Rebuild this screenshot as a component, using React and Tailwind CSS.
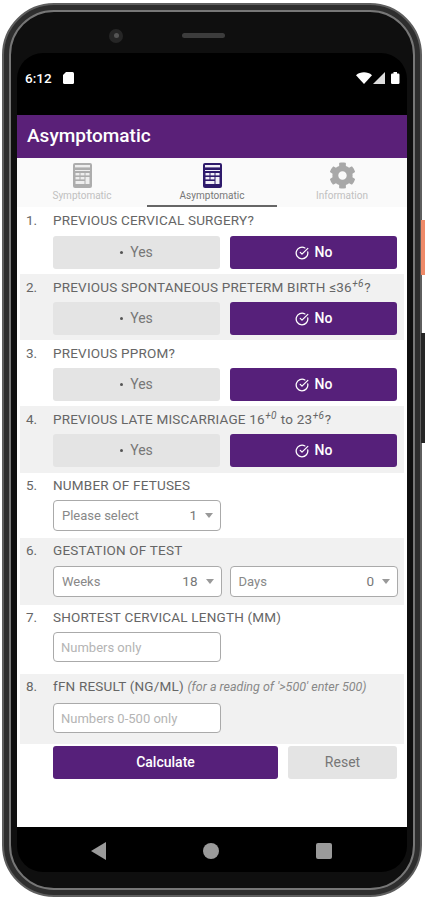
import { CircleCheckBig } from 'lucide-react'
import { FaCog } from 'react-icons/fa'

const YES_NO = [
  { n: '1.', h: 'h-[67px]', mt: 'mt-[8px]', gray: false, label: <>PREVIOUS CERVICAL SURGERY?</> },
  { n: '2.', h: 'h-[66px]', mt: 'mt-[7px]', gray: true, label: <>PREVIOUS SPONTANEOUS PRETERM BIRTH ≤36<Sup>+6</Sup>?</> },
  { n: '3.', h: 'h-[66px]', mt: 'mt-[7px]', gray: false, label: <>PREVIOUS PPROM?</> },
  { n: '4.', h: 'h-[67px]', mt: 'mt-[7px]', gray: true, label: <>PREVIOUS LATE MISCARRIAGE 16<Sup>+0</Sup> to 23<Sup>+6</Sup>?</> },
]

function Sup({ children }) {
  return <sup className="text-[10px] leading-none italic px-[0.5px]">{children}</sup>
}

function CalcIcon({ color, bg }) {
  return (
    <svg width="19" height="25" viewBox="0 0 19 25">
      <rect width="19" height="25" rx="2" fill={color} />
      <rect x="2" y="2" width="15" height="2.4" fill={bg} />
      <rect x="2" y="7" width="15" height="1" fill={bg} />
      <rect x="2.5" y="10" width="4" height="2.4" fill={bg} />
      <rect x="7.5" y="10" width="4" height="2.4" fill={bg} />
      <rect x="12.5" y="10" width="4" height="2.4" fill={bg} />
      <rect x="2.5" y="14" width="4" height="2.4" fill={bg} />
      <rect x="7.5" y="14" width="4" height="2.4" fill={bg} />
      <rect x="12.5" y="14" width="4" height="7" fill={bg} />
      <rect x="2.5" y="18" width="9" height="3" fill={bg} />
    </svg>
  )
}

function Tab({ icon, label, active }) {
  return (
    <div className="flex-1 flex flex-col items-center pt-[4px] relative">
      <div className="h-[27px] flex items-center">{icon}</div>
      <span className={`text-[10px] leading-[12px] mt-[1px] ${active ? 'text-[#777]' : 'text-[#c0c0c0]'}`}>{label}</span>
      {active && <div className="absolute bottom-0 left-0 right-0 h-[2px] bg-[#666]" />}
    </div>
  )
}

function Row({ n, h, pt, gray, label, children }) {
  return (
    <div className={`mx-[3px] pl-[6px] pr-[7px] flex ${h} ${pt} ${gray ? 'bg-[#f1f1f1]' : 'bg-white'}`}>
      <div className="w-[27px] text-[13.5px] leading-[16px] text-[#666]">{n}</div>
      <div className="flex-1 min-w-0">
        <div className="text-[13.5px] leading-[16px] text-[#666] whitespace-nowrap tracking-[0.2px]">{label}</div>
        {children}
      </div>
    </div>
  )
}

function YesNo({ mt }) {
  return (
    <div className={`flex gap-[10px] ${mt}`}>
      <div className="flex-1 h-[33px] rounded-[3px] bg-[#e4e4e4] flex items-center justify-center gap-[7px] text-[14px] text-[#777]">
        <span className="w-[3px] h-[3px] rounded-full bg-[#555]" />
        Yes
      </div>
      <div className="flex-1 h-[33px] rounded-[3px] bg-[#56207a] flex items-center justify-center gap-[6px] text-[14px] font-medium text-white">
        <CircleCheckBig size={14} strokeWidth={2.2} />
        No
      </div>
    </div>
  )
}

function Select({ label, value, className }) {
  return (
    <div className={`h-[31px] rounded-[4px] border border-[#aaa] bg-white flex items-center pl-[8px] pr-[5px] text-[13px] text-[#888] ${className}`}>
      <span className="flex-1">{label}</span>
      <span className="text-[13.5px] text-[#777]">{value}</span>
      <span className="ml-[8px] mr-[2px] w-0 h-0 border-x-[4px] border-x-transparent border-t-[5px] border-t-[#999]" />
    </div>
  )
}

function NumberInput({ placeholder, className }) {
  return (
    <input
      placeholder={placeholder}
      className={`block w-[168px] h-[30px] rounded-[4px] border border-[#aaa] bg-white px-[7px] text-[13px] placeholder:text-[#b4b4b4] outline-none ${className}`}
    />
  )
}

export default function App() {
  return (
    <div className="w-[425px] h-[900px] bg-white pt-[3px] pl-[2px] pr-[3px] pb-[3px] font-['Roboto',sans-serif] relative overflow-hidden">
      {/* side buttons */}
      <div className="absolute right-0 top-[220px] w-[4px] h-[55px] bg-[#ee8a68]" />
      <div className="absolute right-0 top-[333px] w-[4px] h-[110px] bg-[#262626]" />

      <div className="h-full rounded-[52px] border-2 border-[#5e5e5e] bg-[#2e2e2e] p-[5px]">
        <div className="h-full rounded-[45px] border-2 border-[#777] bg-[#0f0f0f] px-[6px] flex flex-col overflow-hidden">
          {/* camera and speaker */}
          <div className="h-[41px] shrink-0 flex items-center pt-[6px] pl-[92px]">
            <div className="w-[14px] h-[14px] rounded-full bg-[#262626] flex items-center justify-center">
              <div className="w-[5px] h-[5px] rounded-full bg-[#555]" />
            </div>
            <div className="ml-[59px] w-[43px] h-[5px] rounded-full bg-[#3c3c3c]" />
          </div>

          <div className="flex-1 flex flex-col rounded-t-[26px] rounded-b-[26px] bg-black overflow-hidden">
            {/* status bar */}
            <div className="h-[62px] shrink-0 flex items-start pt-[17px] pl-[8px] pr-[7px] text-white">
              <span className="text-[13.5px] leading-[16px] font-medium">6:12</span>
              <svg className="ml-[11px] mt-[2px]" width="11" height="12" viewBox="0 0 11 12">
                <path d="M3 0h6.5a1.5 1.5 0 0 1 1.5 1.5v9a1.5 1.5 0 0 1-1.5 1.5h-8A1.5 1.5 0 0 1 0 10.5V3z" fill="#fff" />
              </svg>
              <div className="flex-1" />
              <svg className="mt-[2px]" width="44" height="12" viewBox="0 0 44 12">
                <path d="M0 3.2C4.5-.6 11.5-.6 16 3.2L8 12z" fill="#fff" />
                <path d="M29 0v12H17z" fill="#ddd" />
                <rect x="35" y="1.5" width="8.5" height="10.5" rx="1.2" fill="#fff" />
                <rect x="37.5" y="0" width="3.5" height="2" fill="#fff" />
              </svg>
            </div>

            {/* app */}
            <div className="h-[712px] shrink-0 bg-white flex flex-col">
              <div className="h-[43px] shrink-0 bg-[#5a2078] flex items-center pl-[10px] text-white text-[19px] font-medium">
                Asymptomatic
              </div>
              <div className="h-[49px] shrink-0 bg-[#fafafa] flex">
                <Tab label="Symptomatic" icon={<CalcIcon color="#adadad" bg="#eeeeee" />} />
                <Tab label="Asymptomatic" active icon={<CalcIcon color="#2e1a6b" bg="#f2f0f8" />} />
                <Tab label="Information" icon={<FaCog size={27} color="#a8a8a8" />} />
              </div>

              {YES_NO.map(q => (
                <Row key={q.n} n={q.n} h={q.h} pt="pt-[5px]" gray={q.gray} label={q.label}>
                  <YesNo mt={q.mt} />
                </Row>
              ))}

              <Row n="5." h="h-[65px]" pt="pt-[4px]" gray={false} label="NUMBER OF FETUSES">
                <Select className="mt-[7px] w-[168px]" label="Please select" value="1" />
              </Row>
              <Row n="6." h="h-[67px]" pt="pt-[4px]" gray label="GESTATION OF TEST">
                <div className="flex gap-[8px] mt-[8px] -mr-[1px]">
                  <Select className="flex-1" label="Weeks" value="18" />
                  <Select className="flex-1" label="Days" value="0" />
                </div>
              </Row>
              <Row n="7." h="h-[69px]" pt="pt-[4px]" gray={false} label="SHORTEST CERVICAL LENGTH (MM)">
                <NumberInput className="mt-[7px]" placeholder="Numbers only" />
              </Row>
              <Row
                n="8."
                h="h-[70px]"
                pt="pt-[4px]"
                gray
                label={<>fFN RESULT (NG/ML) <span className="italic text-[12.5px] text-[#888] tracking-normal">(for a reading of '&gt;500' enter 500)</span></>}
              >
                <NumberInput className="mt-[8px]" placeholder="Numbers 0-500 only" />
              </Row>

              <div className="flex gap-[10px] pl-[36px] pr-[10px] mt-[2px]">
                <div className="flex-1 h-[33px] rounded-[3px] bg-[#56207a] text-white text-[14px] font-medium flex items-center justify-center">Calculate</div>
                <div className="w-[109px] h-[33px] rounded-[3px] bg-[#e4e4e4] text-[#777] text-[14px] flex items-center justify-center">Reset</div>
              </div>
            </div>

            {/* nav bar */}
            <div className="flex-1 flex items-start pt-[15px] pl-[74px] pr-[75px] justify-between">
              <svg width="15" height="18" viewBox="0 0 15 18"><path d="M15 0v18L0 9z" fill="#9a9a9a" /></svg>
              <div className="w-[16px] h-[16px] rounded-full bg-[#9a9a9a] mt-[1px]" />
              <div className="w-[16px] h-[16px] rounded-[2px] bg-[#9a9a9a] mt-[1px]" />
            </div>
          </div>
          <div className="h-[16px] shrink-0" />
        </div>
      </div>
    </div>
  )
}
